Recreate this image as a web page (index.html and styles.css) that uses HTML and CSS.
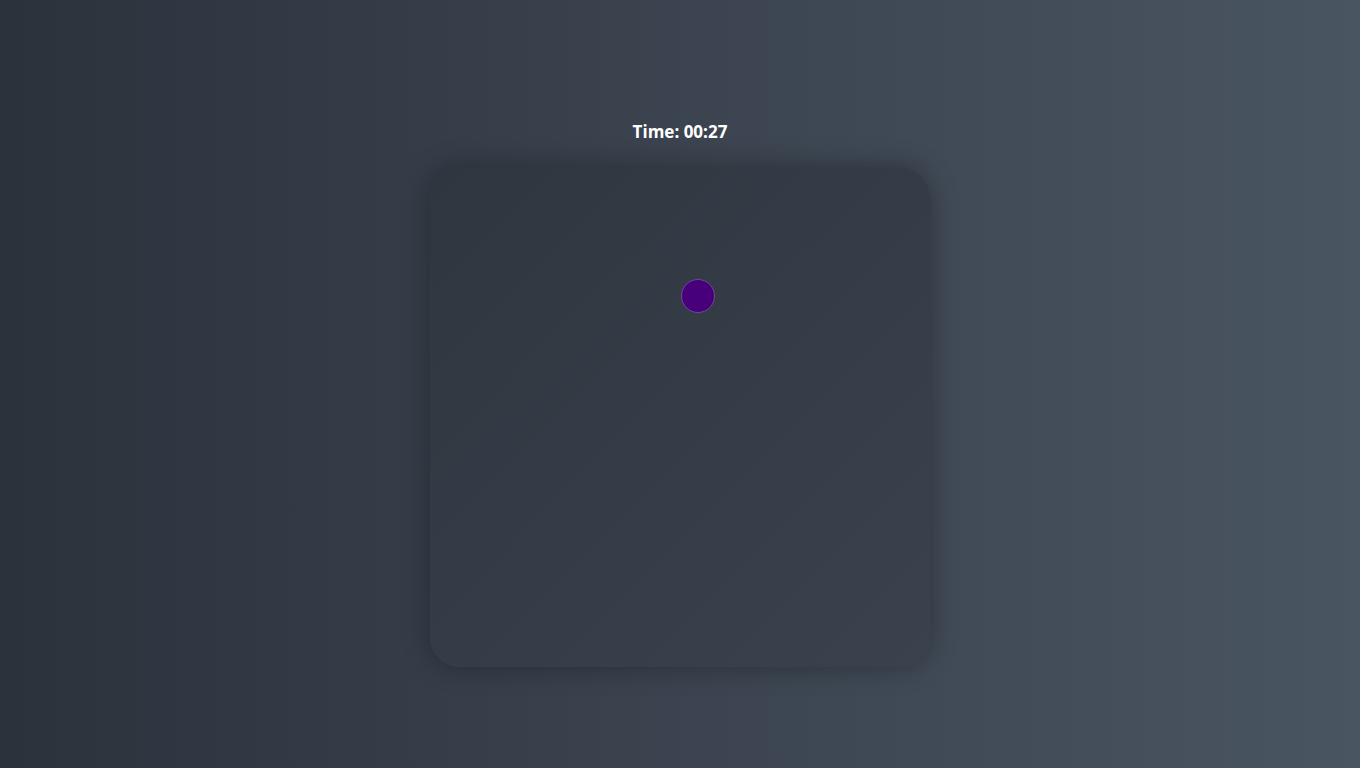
FILE: index.html
```html
<!DOCTYPE html>
<html>
<head>
<meta charset="utf-8">
<link rel="stylesheet" href="styles.css">
</head>
<body>
<main class="game">
  <div class="timer">Time: 00:27</div>
  <div class="board">
    <div class="dot"></div>
  </div>
</main>
</body>
</html>
```
FILE: styles.css
```css
html, body {
  margin: 0;
  height: 100%;
}
body {
  background: linear-gradient(to right, #2b323c, #4a5562);
  font-family: "Open Sans", "Noto Sans", sans-serif;
  color: #ffffff;
}
.game {
  height: 100%;
  display: flex;
  flex-direction: column;
  align-items: center;
  padding-top: 120px;
  box-sizing: border-box;
}
.timer {
  font-size: 17px;
  font-weight: 700;
  line-height: 24px;
  margin-bottom: 23px;
}
.board {
  position: relative;
  width: 500px;
  height: 500px;
  border-radius: 30px;
  background: linear-gradient(135deg, #2f3640, #3a424d);
  box-shadow: 0 0 28px rgba(0, 0, 0, 0.3);
}
.dot {
  position: absolute;
  left: 251px;
  top: 112px;
  width: 34px;
  height: 34px;
  border-radius: 50%;
  background: #48007a;
  border: 1px solid #6a4a9a;
  box-sizing: border-box;
}
```
